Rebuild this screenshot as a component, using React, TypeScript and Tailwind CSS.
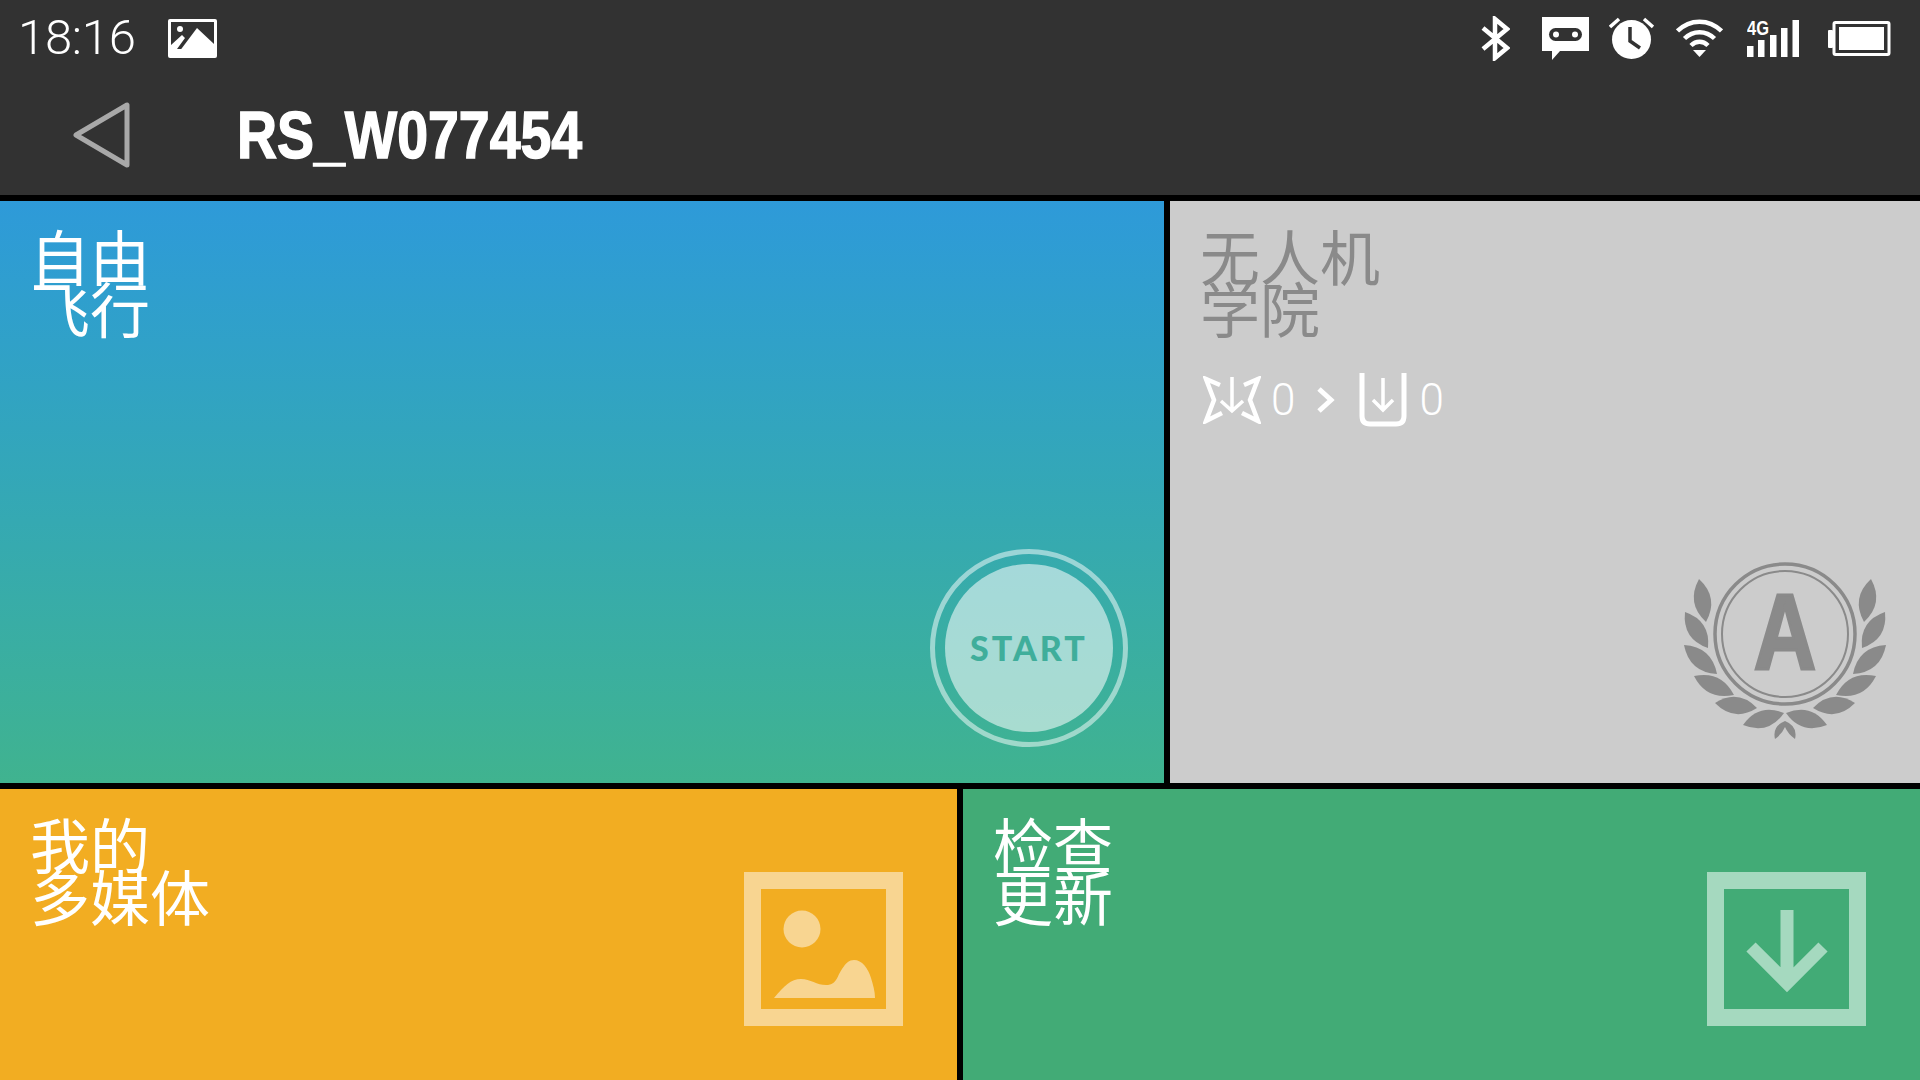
import React from 'react';

const cjk = "font-['Noto_Sans_CJK_SC','Noto_Sans',sans-serif]";

// leaves of the academy wreath: two tips and the bulge on each side
const leaves: [number, number, number, number][] = [
  [39, 39, 46, 82],
  [25, 72, 48, 108],
  [24, 105, 57, 134],
  [34, 136, 74, 155],
  [55, 163, 97, 168],
  [83, 185, 124, 173],
];

function leafPath([x1, y1, x2, y2]: [number, number, number, number], bulge = 17) {
  const mx = (x1 + x2) / 2;
  const my = (y1 + y2) / 2;
  const dx = x2 - x1;
  const dy = y2 - y1;
  const len = Math.hypot(dx, dy);
  const nx = (-dy / len) * bulge;
  const ny = (dx / len) * bulge;
  return `M${x1},${y1} Q${mx + nx},${my + ny} ${x2},${y2} Q${mx - nx},${my - ny} ${x1},${y1}Z`;
}

function Emblem() {
  return (
    <svg width="210" height="185" viewBox="20 20 210 185" fill="#8a8a8a">
      {leaves.map((l, i) => (
        <g key={i}>
          <path d={leafPath(l)} />
          <path d={leafPath(l)} transform="matrix(-1 0 0 1 250 0)" />
        </g>
      ))}
      <path d="M125,181 Q112,186 115,199 Q122,194 125,187 Q128,194 135,199 Q138,186 125,181Z" />
      <circle cx="125" cy="94" r="70" fill="none" stroke="#8a8a8a" strokeWidth="3.5" />
      <circle cx="125" cy="94" r="63" fill="none" stroke="#8a8a8a" strokeWidth="2" />
      <text transform="translate(125 129) scale(0.8 1)" textAnchor="middle" fontSize="108" fontWeight="700" stroke="#8a8a8a" strokeWidth="3" fontFamily="'Liberation Sans',sans-serif">A</text>
    </svg>
  );
}

function StatusIcons() {
  return (
    <div className="flex items-center mr-[29px]">
      {/* bluetooth */}
      <svg width="29" height="45" viewBox="0 0 29 45" fill="none" stroke="white" strokeWidth="4.5" className="mr-[32px]">
        <path d="M2,12 L26,32 L14,42 V3 L26,13 L2,33" />
      </svg>
      {/* chat */}
      <svg width="47" height="43" viewBox="0 0 47 43" className="mr-[20px]">
        <path d="M0,0 H47 V34 H18 L10,43 V34 H0Z" fill="white" />
        <rect x="7" y="11" width="33" height="13" rx="6.5" fill="#323232" />
        <circle cx="14" cy="17.5" r="3" fill="white" />
        <circle cx="33" cy="17.5" r="3" fill="white" />
      </svg>
      {/* alarm */}
      <svg width="45" height="42" viewBox="0 0 45 42" className="mr-[22px]">
        <circle cx="22.5" cy="22.5" r="19.5" fill="white" />
        <path d="M21,10 V24 L31,31" fill="none" stroke="#323232" strokeWidth="3.5" />
        <path d="M1,10 L10,2 M44,10 L35,2" stroke="white" strokeWidth="3.5" />
      </svg>
      {/* wifi */}
      <svg width="47" height="38" viewBox="0 0 47 38" fill="none" stroke="white" strokeWidth="4.5" className="mr-[24px]">
        <path d="M1.5,12 C14,-0.5 33,-0.5 45.5,12" />
        <path d="M8.5,19.5 C17,11 30,11 38.5,19.5" />
        <path d="M15,26.5 C20,21.5 27,21.5 32,26.5" />
        <path d="M17,31 H30 L23.5,38Z" fill="white" stroke="none" />
      </svg>
      {/* signal */}
      <svg width="52" height="37" viewBox="0 0 52 37" fill="white" className="mr-[29px]">
        <text x="0" y="15" fontSize="20" fontWeight="700" textLength="22" lengthAdjust="spacingAndGlyphs" fontFamily="'Liberation Sans',sans-serif">4G</text>
        <rect x="0" y="26" width="6.5" height="11" />
        <rect x="11" y="20" width="6.5" height="17" />
        <rect x="23" y="15" width="6.5" height="22" />
        <rect x="34" y="8" width="6.5" height="29" />
        <rect x="45.5" y="0" width="6.5" height="37" />
      </svg>
      {/* battery */}
      <svg width="63" height="35" viewBox="0 0 63 35">
        <rect x="0" y="9" width="5" height="18" rx="1" fill="white" />
        <rect x="6" y="1.5" width="55" height="32" rx="1.5" fill="none" stroke="white" strokeWidth="3" />
        <rect x="11" y="6" width="45" height="23" fill="white" />
      </svg>
    </div>
  );
}

export default function App() {
  return (
    <div className={`w-[1920px] h-[1080px] overflow-hidden bg-black flex flex-col gap-[6px] ${cjk}`}>
      {/* Header */}
      <div className="h-[195px] bg-[#323232] shrink-0">
        <div className="h-[76px] flex items-center justify-between">
          <div className="flex items-center pl-[18px]">
            <span className="text-[49px] font-light text-white tracking-[-0.3px] font-['Roboto',sans-serif]">18:16</span>
            <svg width="49" height="39" viewBox="0 0 49 39" className="ml-[32px]">
              <rect width="49" height="39" rx="2" fill="white" />
              <rect x="3" y="3" width="43" height="27" fill="#323232" />
              <circle cx="12" cy="10" r="3" fill="white" />
              <path d="M3,26 L14,16 L17,19 L9,30 H3Z M11,33 L29,9 L46,25 V33Z" fill="white" />
            </svg>
          </div>
          <StatusIcons />
        </div>
        <div className="h-[119px] flex items-start">
          <svg width="57" height="66" viewBox="0 0 57 66" className="ml-[73px] mt-[26px]" fill="none" stroke="#a8a8a8" strokeWidth="5" strokeLinejoin="round">
            <path d="M54,3 V63 L3,33Z" />
          </svg>
          <span className="ml-[107px] mt-[19px] inline-block origin-left scale-x-[0.84] text-[66px] leading-[80px] font-bold text-white [-webkit-text-stroke:1.5px_white] font-['Liberation_Sans',sans-serif]">RS_W077454</span>
        </div>
      </div>

      {/* Top row */}
      <div className="h-[582px] flex gap-[6px] shrink-0">
        <div className="w-[1164px] bg-gradient-to-b from-[#2e9ad9] to-[#40b38f] flex justify-between pl-[30px] pr-[36px] pt-[28px] pb-[36px]">
          <div className="text-[60px] leading-[52px] text-white">自由<br />飞行</div>
          <div className="self-end w-[198px] h-[198px] rounded-full border-[5px] border-white/50 p-[10px]">
            <div className="w-full h-full rounded-full bg-white/55 flex items-center justify-center pb-[2px]">
              <span className="text-[34px] font-black tracking-[3px] text-[#3fae9b] font-['Lato',sans-serif]">START</span>
            </div>
          </div>
        </div>
        <div className="flex-1 bg-[#cccccc] flex justify-between pl-[30px] pr-[30px] pt-[28px] pb-[38px]">
          <div>
            <div className="text-[60px] leading-[52px] text-[#8a8a8a]">无人机<br />学院</div>
            <div className="flex items-center mt-[40px] text-white text-[44px] font-light font-['Roboto',sans-serif] leading-none">
              <svg width="58" height="48" viewBox="0 0 58 48" fill="none" stroke="white" strokeWidth="4.5" className="ml-[3px]">
                <path d="M17,9 L3,3 L11,24 L3,45 L19,37 M41,9 L55,3 L47,24 L55,45 L39,37" />
                <path d="M29,1 V35 M18,25 L29,35 L40,25" strokeWidth="3.5" />
              </svg>
              <span className="ml-[10px]">0</span>
              <svg width="18" height="28" viewBox="0 0 18 28" fill="none" stroke="white" strokeWidth="5" className="ml-[22px]">
                <path d="M2,3 L14,14 L2,25" />
              </svg>
              <svg width="48" height="54" viewBox="0 0 48 54" fill="none" stroke="white" strokeWidth="5" className="ml-[24px]">
                <path d="M3,0 V43 Q3,51 11,51 H37 Q45,51 45,43 V0" />
                <path d="M24,5 V36 M14,27 L24,37 L34,27" strokeWidth="3.5" />
              </svg>
              <span className="ml-[12px]">0</span>
            </div>
          </div>
          <div className="self-end">
            <Emblem />
          </div>
        </div>
      </div>

      {/* Bottom row */}
      <div className="flex-1 flex gap-[6px]">
        <div className="w-[957px] bg-[#f2ad22] flex justify-between pl-[30px] pr-[54px] pt-[28px]">
          <div className="text-[60px] leading-[52px] text-white">我的<br />多媒体</div>
          <svg width="159" height="154" viewBox="0 0 159 154" className="mt-[55px]" fill="#f8d591">
            <rect x="8.5" y="8.5" width="142" height="137" fill="none" stroke="#f8d591" strokeWidth="17" />
            <circle cx="58" cy="57" r="18.5" />
            <path d="M30,126 C40,114 47,107 57,107 C67,107 74,114 84,113 C93,112 93,104 98,97 C102,91 105,88 110,88 C118,88 124,96 127,106 C129,113 131,119 131,126Z" />
          </svg>
        </div>
        <div className="flex-1 bg-[#42ab76] flex justify-between pl-[30px] pr-[54px] pt-[28px]">
          <div className="text-[60px] leading-[52px] text-white">检查<br />更新</div>
          <svg width="159" height="154" viewBox="0 0 159 154" className="mt-[55px]" fill="none" stroke="#a5d9bf">
            <rect x="8.5" y="8.5" width="142" height="137" strokeWidth="17" />
            <path d="M80,38 V105 M44,75 L80,111 L116,75" strokeWidth="13" />
          </svg>
        </div>
      </div>
    </div>
  );
}
